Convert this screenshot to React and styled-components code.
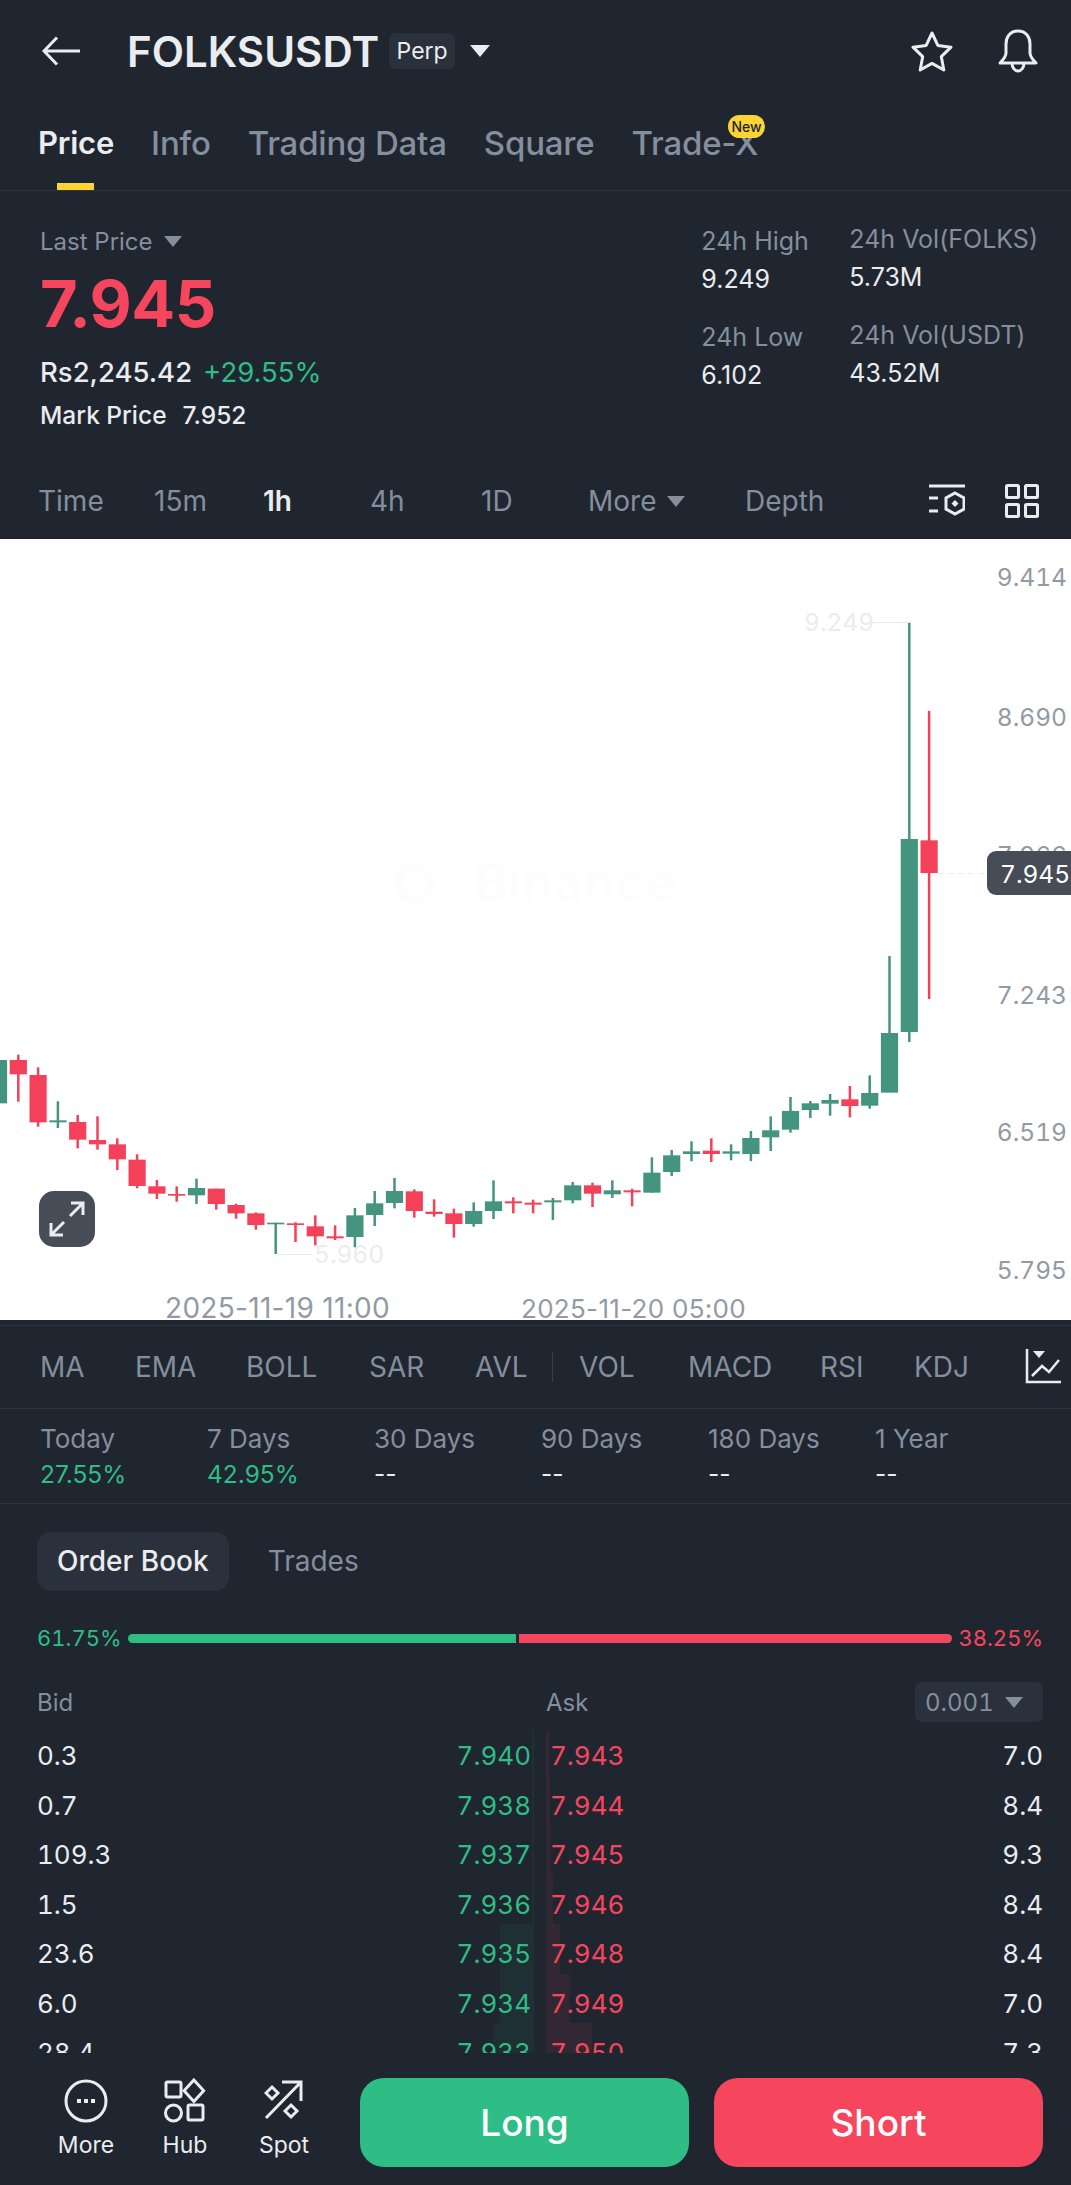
import React from "react";
import styled, { createGlobalStyle } from "styled-components";

const BG = "#1f2630";
const LINE = "#2e3540";
const GREY = "#848e9c";
const LIGHT = "#eaecef";
const GREEN = "#2ebd85";
const RED = "#f6465d";
const CANDLE_GREEN = "#44957f";
const CANDLE_RED = "#f5405a";

const GlobalStyle = createGlobalStyle`
  html, body {
    margin: 0;
    padding: 0;
    background: ${BG};
  }
  body {
    font-family: Inter, "Liberation Sans", sans-serif;
    color: ${LIGHT};
  }
`;

const Page = styled.div`
  width: 1071px;
  height: 2185px;
  overflow: hidden;
  background: ${BG};
`;

const TopBar = styled.header`
  height: 102px;
  display: flex;
  align-items: center;
  padding: 0 32px 0 42px;
  box-sizing: border-box;
`;

const Title = styled.h1`
  margin: 0 10px 0 47px;
  font-size: 42px;
  font-weight: 600;
  color: ${LIGHT};
`;

const PerpTag = styled.span`
  width: 66px;
  height: 36px;
  display: flex;
  align-items: center;
  justify-content: center;
  background: #2a313c;
  border-radius: 6px;
  font-size: 23px;
  color: ${LIGHT};
`;

const Caret = styled.i`
  display: inline-block;
  width: 0;
  height: 0;
  margin-left: ${(p) => p.$gap || 11}px;
  border-left: ${(p) => p.$size || 9.5}px solid transparent;
  border-right: ${(p) => p.$size || 9.5}px solid transparent;
  border-top: ${(p) => (p.$size || 9.5) * 1.2}px solid ${(p) => p.$color || GREY};
`;

const TopIcons = styled.div`
  margin-left: auto;
  display: flex;
  align-items: center;
  gap: 43px;
`;

const TabBar = styled.nav`
  height: 89px;
  box-sizing: border-box;
  display: flex;
  gap: 37px;
  padding: 21px 0 0 38px;
  border-bottom: 1px solid ${LINE};
`;

const Tab = styled.span`
  position: relative;
  height: 40px;
  line-height: 40px;
  font-size: ${(p) => (p.$active ? 31 : 33)}px;
  font-weight: ${(p) => (p.$active ? 600 : 500)};
  color: ${(p) => (p.$active ? LIGHT : GREY)};
  letter-spacing: -0.2px;

  ${(p) =>
    p.$active &&
    `
    &::after {
      content: "";
      position: absolute;
      left: 19px;
      bottom: -27px;
      width: 37px;
      height: 7px;
      background: #fcd535;
    }
  `}
`;

const NewBadge = styled.b`
  position: absolute;
  top: -8px;
  right: -7px;
  width: 37px;
  height: 23px;
  border-radius: 12px;
  background: #fcd535;
  color: #1e2329;
  font-size: 14px;
  font-weight: 500;
  line-height: 23px;
  text-align: center;
  letter-spacing: 0;
`;

const Stats = styled.section`
  height: 279px;
  box-sizing: border-box;
  display: flex;
  justify-content: space-between;
  padding: 34px 33px 0 40px;
`;

const PriceCol = styled.div`
  display: flex;
  flex-direction: column;
`;

const PriceLabel = styled.div`
  height: 32px;
  display: flex;
  align-items: center;
  font-size: 24px;
  color: ${GREY};
`;

const BigPrice = styled.div`
  margin-top: 15px;
  height: 64px;
  line-height: 64px;
  font-size: 65px;
  font-weight: 700;
  color: ${RED};
  letter-spacing: -0.5px;
`;

const FiatRow = styled.div`
  margin-top: 18px;
  display: flex;
  gap: 11px;
  font-size: 27.500px;
  line-height: 36px;
  font-weight: 500;
`;

const Change = styled.span`
  color: ${GREEN};
  font-weight: 400;
`;

const MarkRow = styled.div`
  margin-top: 9px;
  display: flex;
  gap: 16px;
  font-size: 24.500px;
  line-height: 32px;
  font-weight: 500;
`;

const SideStats = styled.div`
  display: grid;
  grid-template-columns: 148px auto;
  grid-auto-rows: 96px;
`;

const SideStat = styled.div`
  margin-top: ${(p) => (p.$raised ? -2 : 0)}px;
`;

const SideLabel = styled.div`
  font-size: 25px;
  line-height: 32px;
  color: ${GREY};
`;

const SideValue = styled.div`
  margin-top: 6px;
  font-size: 25px;
  line-height: 32px;
`;

const TimeBar = styled.div`
  height: 69px;
  box-sizing: border-box;
  display: grid;
  grid-template-columns: 116px 109px 107px 111px 107px 157px 183px auto;
  align-items: center;
  padding: 0 33px 7px 38px;
`;

const TimeItem = styled.span`
  display: flex;
  align-items: center;
  font-size: 28px;
  font-weight: ${(p) => (p.$active ? 600 : 400)};
  color: ${(p) => (p.$active ? LIGHT : GREY)};
`;

const TimeIcons = styled.div`
  display: flex;
  align-items: center;
  gap: 40px;
`;

const ChartBox = styled.div`
  position: relative;
  height: 781px;
  background: #fff;
  overflow: hidden;

  svg {
    display: block;
  }
`;

const TabularGroup = styled.g`
  font-variant-numeric: tabular-nums;
`;

const ExpandButton = styled.div`
  position: absolute;
  left: 39px;
  top: 652px;
  width: 56px;
  height: 56px;
  border-radius: 15px;
  background: #474d57;
  display: flex;
  align-items: center;
  justify-content: center;
`;

const LastPill = styled.div`
  position: absolute;
  right: 0;
  top: 312px;
  width: 84px;
  height: 44px;
  box-sizing: border-box;
  padding-left: 13px;
  border-radius: 9px 0 0 9px;
  background: #474d57;
  color: #fff;
  font-size: 24.500px;
  font-variant-numeric: tabular-nums;
  line-height: 46px;
`;

const IndicatorBar = styled.div`
  height: 84px;
  box-sizing: border-box;
  margin-top: 5px;
  display: grid;
  grid-template-columns: 95px 111px 123px 106px 77px 27px 109px 132px 94px 111px auto;
  align-items: center;
  padding: 0 0 0 40px;
  border-top: 1px solid ${LINE};
  border-bottom: 1px solid ${LINE};
`;

const Indicator = styled.span`
  font-size: 28px;
  color: ${GREY};
`;

const Separator = styled.span`
  width: 1px;
  height: 30px;
  background: #3a414d;
`;

const PeriodRow = styled.div`
  height: 95px;
  box-sizing: border-box;
  display: grid;
  grid-template-columns: repeat(6, 167px);
  padding: 15px 0 0 40px;
  border-bottom: 1px solid ${LINE};
`;

const PeriodLabel = styled.div`
  font-size: 26px;
  line-height: 30px;
  color: ${GREY};
`;

const PeriodValue = styled.div`
  margin-top: 5px;
  font-size: 24.500px;
  line-height: 30px;
  color: ${(p) => (p.$up ? GREEN : LIGHT)};
`;

const BookTabs = styled.div`
  margin: 28px 0 0 37px;
  height: 59px;
  display: flex;
  align-items: center;
  gap: 39px;
`;

const BookTab = styled.span`
  height: 59px;
  line-height: 59px;
  font-size: 28px;
  font-weight: ${(p) => (p.$active ? 500 : 400)};
  color: ${(p) => (p.$active ? LIGHT : GREY)};
  ${(p) => p.$active && "background: #2a313c; border-radius: 14px; padding: 0 20px;"}
`;

const RatioRow = styled.div`
  margin-top: 26px;
  height: 42px;
  display: flex;
  align-items: center;
  padding: 0 28px 0 37px;
  font-size: 22px;
  font-variant-numeric: tabular-nums;
`;

const RatioText = styled.span`
  color: ${(p) => p.$color};
  white-space: nowrap;
  ${(p) => (p.$end ? "margin-left: auto;" : "width: 83px;")}
`;

const RatioBar = styled.div`
  flex: none;
  height: 9px;
  background: ${(p) => p.$color};
  border-radius: ${(p) => (p.$left ? "5px 0 0 5px" : "0 5px 5px 0")};
  margin: ${(p) => (p.$left ? "0 3px 0 8px" : "0")};
`;

const BookHead = styled.div`
  margin-top: 23px;
  height: 40px;
  display: grid;
  grid-template-columns: 509px 369px auto;
  align-items: center;
  padding: 0 28px 0 37px;
  font-size: 24px;
  color: ${GREY};
`;

const StepSelect = styled.div`
  height: 40px;
  display: flex;
  align-items: center;
  padding: 0 0 0 10px;
  border-radius: 7px;
  background: #2a313c;
  font-variant-numeric: tabular-nums;
`;

const BookBody = styled.div`
  margin-top: 9px;
  height: 322px;
  overflow: hidden;
`;

const BookRow = styled.div`
  height: 49.500px;
  display: grid;
  grid-template-columns: 494px 493px;
  column-gap: 19px;
  padding-left: 37px;
  font-size: 26px;
  font-variant-numeric: tabular-nums;
`;

const Side = styled.div`
  position: relative;
  display: flex;
  justify-content: space-between;
  align-items: center;
`;

const DepthBar = styled.div`
  position: absolute;
  top: -5px;
  bottom: 5px;
  ${(p) => (p.$bid ? "right: -3px;" : "left: -4px;")}
  background: ${(p) => (p.$bid ? "rgba(46,189,133,0.07)" : "rgba(246,70,93,0.09)")};
`;

const Price = styled.span`
  position: relative;
  color: ${(p) => p.$color};
`;

const Qty = styled.span`
  position: relative;
  color: ${LIGHT};
`;

const BottomBar = styled.footer`
  height: 134px;
  box-sizing: border-box;
  display: flex;
  padding: 25px 28px 20px 0;
`;

const NavItems = styled.div`
  width: 360px;
  display: grid;
  grid-template-columns: 100px 98px 100px;
  padding-left: 36px;
  box-sizing: border-box;
`;

const NavItem = styled.div`
  display: flex;
  flex-direction: column;
  align-items: center;
  gap: 7px;
  font-size: 23px;
  line-height: 28px;
  color: ${LIGHT};

  svg {
    height: 46px;
  }
`;

const Action = styled.button`
  width: 329px;
  height: 89px;
  border: none;
  border-radius: 24px;
  background: ${(p) => p.$color};
  color: #fff;
  font-family: inherit;
  font-size: 37px;
  font-weight: 500;
  margin-right: ${(p) => p.$gap || 0}px;
`;

// [bodyTop, bodyBottom, wickTop, wickBottom, colour], read off at 3x from y=1040
const candles = [
  [60, 190, -15, 210, "g"], [60, 103, 44, 185, "r"], [105, 247, 82, 260, "r"], [241, 247, 184, 264, "g"],
  [246, 299, 225, 325, "r"], [300, 313, 229, 329, "r"], [313, 358, 295, 390, "r"], [359, 438, 343, 445, "r"],
  [439, 461, 420, 477, "r"], [462, 467, 439, 485, "r"], [444, 466, 416, 492, "g"], [446, 492, 446, 509, "r"],
  [495, 520, 491, 536, "r"], [520, 555, 517, 569, "r"], [548, 553, 548, 642, "g"], [550, 555, 547, 606, "r"],
  [559, 589, 526, 616, "r"], [589, 595, 556, 600, "r"], [526, 591, 504, 622, "g"], [490, 525, 453, 558, "g"],
  [453, 489, 414, 505, "g"], [454, 513, 448, 533, "r"], [515, 522, 478, 530, "r"], [520, 552, 506, 593, "r"],
  [513, 552, 487, 560, "g"], [484, 513, 421, 537, "g"], [484, 490, 472, 520, "r"], [488, 494, 479, 520, "r"],
  [481, 487, 474, 540, "g"], [436, 481, 426, 490, "g"], [436, 461, 428, 501, "r"], [451, 463, 421, 474, "g"],
  [451, 457, 446, 499, "r"], [398, 458, 352, 458, "g"], [346, 396, 330, 408, "g"], [334, 342, 304, 364, "g"],
  [332, 342, 295, 366, "r"], [334, 341, 313, 361, "g"], [294, 342, 273, 363, "g"], [271, 292, 229, 333, "g"],
  [213, 269, 171, 278, "g"], [190, 210, 183, 234, "g"], [180, 191, 162, 227, "g"], [178, 198, 138, 232, "r"],
  [159, 197, 106, 206, "g"], [-21, 158, -252, -21, "g"], [-603, -24, -1252, 6, "g"], [-599, -501, -987, -123, "r"],
];

const axisLabels = [
  ["9.414", 577],
  ["8.690", 717],
  ["7.966", 855],
  ["7.243", 995],
  ["6.519", 1132],
  ["5.795", 1270],
];

const bookRows = [
  ["0.3", "7.940", "7.943", "7.0", 2, 3],
  ["0.7", "7.938", "7.944", "8.4", 2, 4],
  ["109.3", "7.937", "7.945", "9.3", 2, 5],
  ["1.5", "7.936", "7.946", "8.4", 2, 7],
  ["23.6", "7.935", "7.948", "8.4", 34, 14],
  ["6.0", "7.934", "7.949", "7.0", 34, 24],
  ["28.4", "7.933", "7.950", "7.3", 41, 46],
];

function Chart() {
  const toY = (v) => 1040 + v / 3;
  return (
    <svg width="1071" height="781" viewBox="0 539 1071 781">
      <circle cx="414" cy="883" r="16" fill="none" stroke="#fdfdfd" strokeWidth="8" />
      <text x="575" y="901" textAnchor="middle" fontSize="52" fontWeight="600" fill="#fdfdfd" fontFamily="Inter">
        Binance
      </text>
      {candles.map(([bt, bb, wt, wb, c], i) => {
        const x = -1.5 + i * 19.8;
        const fill = c === "g" ? CANDLE_GREEN : CANDLE_RED;
        return (
          <g key={i} fill={fill}>
            <rect x={x - 1.25} y={toY(wt)} width="2.5" height={(wb - wt) / 3} />
            <rect x={x - 8.6} y={toY(bt)} width="17.2" height={(bb - bt) / 3} />
          </g>
        );
      })}
      <TabularGroup fontFamily="Inter" fontSize="24.500" fill="#929aa5">
        {axisLabels.map(([t, y]) => (
          <text key={t} x="1067" y={y + 9} textAnchor="end">
            {t}
          </text>
        ))}
      </TabularGroup>
      <g fontFamily="Inter" fill="#929aa5" letterSpacing="0.3">
        <text x="165" y="1318" fontSize="28">2025-11-19 11:00</text>
        <text x="521" y="1318" fontSize="26">2025-11-20 05:00</text>
      </g>
      <TabularGroup fontFamily="Inter" fontSize="24.500" fill="#ececec">
        <text x="804" y="631">9.249</text>
        <text x="314" y="1263">5.960</text>
      </TabularGroup>
      <line x1="872" y1="622.500" x2="909" y2="622.500" stroke="#ececec" />
      <line x1="277" y1="1254.500" x2="312" y2="1254.500" stroke="#ececec" />
      <line x1="938" y1="873.500" x2="987" y2="873.500" stroke="#eeeeee" strokeDasharray="6 4" />
    </svg>
  );
}

export default function App() {
  return (
    <Page>
      <GlobalStyle />
      <TopBar>
        <svg width="38" height="30" viewBox="0 0 38 30" fill="none" stroke="#eaecef" strokeWidth="3">
          <path d="M38 15H3M15 1.500L2 15l13 13.500" />
        </svg>
        <Title>FOLKSUSDT</Title>
        <PerpTag>Perp</PerpTag>
        <Caret $size={10} $gap={15} $color={LIGHT} />
        <TopIcons>
          <svg width="44" height="42" viewBox="0 0 44 42" fill="none" stroke="#eaecef" strokeWidth="3" strokeLinejoin="round">
            <path d="M22 3l5.800 12.400 13.200 1.800-9.700 9.400 2.500 13.400L22 33.400 10.200 40l2.500-13.400L3 17.200l13.200-1.800z" />
          </svg>
          <svg width="42" height="44" viewBox="0 0 42 44" fill="none" stroke="#eaecef" strokeWidth="3" strokeLinejoin="round">
            <path d="M21 2c8 0 12 6 12 13v9c0 4 3 7 6 10H3c3-3 6-6 6-10v-9C9 8 13 2 21 2z" />
            <path d="M15 34c0 5 3 8 6 8s6-3 6-8" />
          </svg>
        </TopIcons>
      </TopBar>

      <TabBar>
        <Tab $active>Price</Tab>
        <Tab>Info</Tab>
        <Tab>Trading Data</Tab>
        <Tab>Square</Tab>
        <Tab>
          Trade-X
          <NewBadge>New</NewBadge>
        </Tab>
      </TabBar>

      <Stats>
        <PriceCol>
          <PriceLabel>
            Last Price
            <Caret />
          </PriceLabel>
          <BigPrice>7.945</BigPrice>
          <FiatRow>
            <span>Rs2,245.42</span>
            <Change>+29.55%</Change>
          </FiatRow>
          <MarkRow>
            <span>Mark Price</span>
            <span>7.952</span>
          </MarkRow>
        </PriceCol>
        <SideStats>
          <SideStat>
            <SideLabel>24h High</SideLabel>
            <SideValue>9.249</SideValue>
          </SideStat>
          <SideStat $raised>
            <SideLabel>24h Vol(FOLKS)</SideLabel>
            <SideValue>5.73M</SideValue>
          </SideStat>
          <SideStat>
            <SideLabel>24h Low</SideLabel>
            <SideValue>6.102</SideValue>
          </SideStat>
          <SideStat $raised>
            <SideLabel>24h Vol(USDT)</SideLabel>
            <SideValue>43.52M</SideValue>
          </SideStat>
        </SideStats>
      </Stats>

      <TimeBar>
        <TimeItem>Time</TimeItem>
        <TimeItem>15m</TimeItem>
        <TimeItem $active>1h</TimeItem>
        <TimeItem>4h</TimeItem>
        <TimeItem>1D</TimeItem>
        <TimeItem>
          More
          <Caret />
        </TimeItem>
        <TimeItem>Depth</TimeItem>
        <TimeIcons>
          <svg width="37" height="34" viewBox="0 0 37 34" fill="none" stroke="#eaecef" strokeWidth="3">
            <path d="M1 2h36M1 14h9M1 27h9" />
            <path d="M27 9l9 5v11l-9 5-9-5V14z" />
            <path d="M27 16l3.500 3.500L27 23l-3.500-3.500z" fill="#eaecef" stroke="none" />
          </svg>
          <svg width="34" height="34" viewBox="0 0 34 34" fill="none" stroke="#eaecef" strokeWidth="3">
            <rect x="1.500" y="1.500" width="12" height="12" rx="1" />
            <rect x="20.500" y="1.500" width="12" height="12" rx="1" />
            <rect x="1.500" y="20.500" width="12" height="12" rx="1" />
            <rect x="20.500" y="20.500" width="12" height="12" rx="1" />
          </svg>
        </TimeIcons>
      </TimeBar>

      <ChartBox>
        <Chart />
        <ExpandButton>
          <svg width="36" height="36" viewBox="0 0 36 36" fill="none" stroke="#eaecef" strokeWidth="3">
            <path d="M21 15L34 2M22 2h12v12M15 21L2 34M2 22v12h12" />
          </svg>
        </ExpandButton>
        <LastPill>7.945</LastPill>
      </ChartBox>

      <IndicatorBar>
        <Indicator>MA</Indicator>
        <Indicator>EMA</Indicator>
        <Indicator>BOLL</Indicator>
        <Indicator>SAR</Indicator>
        <Indicator>AVL</Indicator>
        <Separator />
        <Indicator>VOL</Indicator>
        <Indicator>MACD</Indicator>
        <Indicator>RSI</Indicator>
        <Indicator>KDJ</Indicator>
        <svg width="36" height="36" viewBox="0 0 36 36" fill="none" stroke="#eaecef" strokeWidth="2.500">
          <path d="M2 0v33h34" />
          <path d="M7 27l10-10 7 6 10-12" />
          <path d="M8 2h12l-6 7z" fill="#eaecef" stroke="none" />
        </svg>
      </IndicatorBar>

      <PeriodRow>
        {[
          ["Today", "27.55%", true],
          ["7 Days", "42.95%", true],
          ["30 Days", "--"],
          ["90 Days", "--"],
          ["180 Days", "--"],
          ["1 Year", "--"],
        ].map(([label, value, up]) => (
          <div key={label}>
            <PeriodLabel>{label}</PeriodLabel>
            <PeriodValue $up={up}>{value}</PeriodValue>
          </div>
        ))}
      </PeriodRow>

      <BookTabs>
        <BookTab $active>Order Book</BookTab>
        <BookTab>Trades</BookTab>
      </BookTabs>

      <RatioRow>
        <RatioText $color={GREEN}>61.75%</RatioText>
        <RatioBar $left $color={GREEN} style={{ width: 388 }} />
        <RatioBar $color={RED} style={{ width: 433 }} />
        <RatioText $end $color={RED}>38.25%</RatioText>
      </RatioRow>

      <BookHead>
        <span>Bid</span>
        <span>Ask</span>
        <StepSelect>
          0.001
          <Caret />
        </StepSelect>
      </BookHead>

      <BookBody>
        {bookRows.map(([bidQty, bid, ask, askQty, bidDepth, askDepth]) => (
          <BookRow key={bid}>
            <Side>
              <DepthBar $bid style={{ width: bidDepth }} />
              <Qty>{bidQty}</Qty>
              <Price $color={GREEN}>{bid}</Price>
            </Side>
            <Side>
              <DepthBar style={{ width: askDepth }} />
              <Price $color={RED}>{ask}</Price>
              <Qty>{askQty}</Qty>
            </Side>
          </BookRow>
        ))}
      </BookBody>

      <BottomBar>
        <NavItems>
          <NavItem>
            <svg width="44" height="46" viewBox="0 0 44 46" fill="none" stroke="#eaecef" strokeWidth="3">
              <circle cx="22" cy="23" r="20" />
              <path d="M13 21h4v4h-4zM20 21h4v4h-4zM27 21h4v4h-4z" fill="#eaecef" stroke="none" />
            </svg>
            More
          </NavItem>
          <NavItem>
            <svg width="42" height="46" viewBox="0 0 42 46" fill="none" stroke="#eaecef" strokeWidth="3">
              <rect x="2" y="4" width="15" height="15" rx="1.500" />
              <path d="M31 2l10 11-10 11-10-11z" transform="translate(-0.500 0) scale(0.98)" />
              <circle cx="9.500" cy="35" r="8" />
              <rect x="24" y="27" width="15" height="15" rx="1.500" />
            </svg>
            Hub
          </NavItem>
          <NavItem>
            <svg width="40" height="46" viewBox="0 0 40 46" fill="none" stroke="#eaecef" strokeWidth="3">
              <path d="M2 40L37 4M18 4h19v19" />
              <path d="M8 9l6 6-6 6-6-6zM27 27l6 6-6 6-6-6z" />
            </svg>
            Spot
          </NavItem>
        </NavItems>
        <Action $color={GREEN} $gap={25}>Long</Action>
        <Action $color={RED}>Short</Action>
      </BottomBar>
    </Page>
  );
}
